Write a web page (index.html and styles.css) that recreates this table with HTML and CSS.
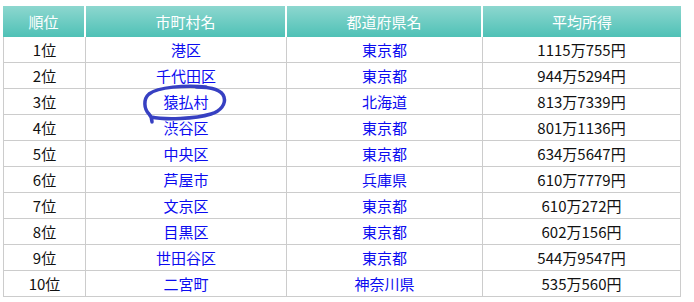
FILE: index.html
```html
<!DOCTYPE html>
<html lang="ja">
<head>
<meta charset="utf-8">
<link rel="stylesheet" href="styles.css">
</head>
<body>
<div class="wrap">
<table class="rank">
  <colgroup>
    <col class="c1"><col class="c2"><col class="c3"><col class="c4">
  </colgroup>
  <thead>
    <tr><th>順位</th><th>市町村名</th><th>都道府県名</th><th>平均所得</th></tr>
  </thead>
  <tbody>
    <tr><td>1位</td><td class="link">港区</td><td class="link">東京都</td><td>1115万755円</td></tr>
    <tr><td>2位</td><td class="link">千代田区</td><td class="link">東京都</td><td>944万5294円</td></tr>
    <tr><td>3位</td><td class="link">猿払村</td><td class="link">北海道</td><td>813万7339円</td></tr>
    <tr><td>4位</td><td class="link">渋谷区</td><td class="link">東京都</td><td>801万1136円</td></tr>
    <tr><td>5位</td><td class="link">中央区</td><td class="link">東京都</td><td>634万5647円</td></tr>
    <tr><td>6位</td><td class="link">芦屋市</td><td class="link">兵庫県</td><td>610万7779円</td></tr>
    <tr><td>7位</td><td class="link">文京区</td><td class="link">東京都</td><td>610万272円</td></tr>
    <tr><td>8位</td><td class="link">目黒区</td><td class="link">東京都</td><td>602万156円</td></tr>
    <tr><td>9位</td><td class="link">世田谷区</td><td class="link">東京都</td><td>544万9547円</td></tr>
    <tr><td>10位</td><td class="link">二宮町</td><td class="link">神奈川県</td><td>535万560円</td></tr>
  </tbody>
</table>
<svg class="circle" width="95" height="42" viewBox="0 0 95 42">
  <path d="M 66 5 C 45 3, 18 5, 9 12 C 3 17, 4 27, 9 32 C 12 35, 12 38, 12 40 M 11 35 C 25 38, 55 37, 71 32 C 81 29, 86 22, 84 15 C 82 8, 73 5, 56 5" fill="none" stroke="#3740c2" stroke-width="3.5" stroke-linecap="round" stroke-linejoin="round"/>
</svg>
</div>
</body>
</html>
```
FILE: styles.css
```css
html, body {
  margin: 0;
  padding: 0;
  background: #fff;
}
body {
  font-family: "Noto Sans CJK JP", "Noto Sans", sans-serif;
  font-size: 15px;
  color: #111;
}
.wrap {
  position: relative;
  padding: 6px 0 0 3px;
}
.rank {
  table-layout: fixed;
  border-collapse: separate;
  border-spacing: 0;
  width: 678px;
}
.c1 { width: 83px; }
.c2 { width: 201px; }
.c3 { width: 196px; }
.c4 { width: 198px; }
.rank th {
  height: 31px;
  padding: 0;
  font-weight: normal;
  color: #fff;
  background: linear-gradient(#8dd7cf, #4fc1b6);
  border-right: 2px solid #fff;
  line-height: 31px;
}
.rank th:last-child {
  border-right: none;
}
.rank td {
  height: 25px;
  padding: 0;
  text-align: center;
  line-height: 25px;
  border-right: 1px solid #cccccc;
  border-bottom: 1px solid #cccccc;
}
.rank td:first-child {
  border-left: 1px solid #cccccc;
}
.rank td.link {
  color: #0b0bf0;
}
.circle {
  position: absolute;
  left: 140px;
  top: 82px;
}
```
